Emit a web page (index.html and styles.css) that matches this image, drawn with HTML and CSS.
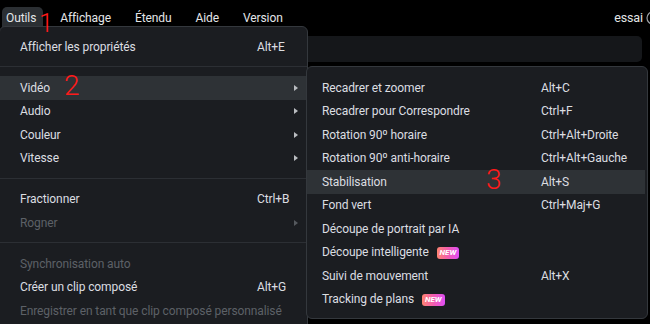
FILE: index.html
```html
<!DOCTYPE html>
<html lang="fr">
<head>
  <meta charset="UTF-8">
  <title>Menu Outils</title>
  <link rel="stylesheet" href="styles.css">
</head>
<body>

  <div class="topbar">
    <div class="menubar">
      <span class="mb-item active">Outils</span>
      <span class="mb-item">Affichage</span>
      <span class="mb-item">Étendu</span>
      <span class="mb-item">Aide</span>
      <span class="mb-item">Version</span>
    </div>
    <div class="user">
      <span>essai</span>
      <svg width="14" height="14" viewBox="0 0 14 14">
        <circle cx="7" cy="7" r="6" fill="none" stroke="#9a9ea3" stroke-width="1.2"/>
        <path d="M4.5 6 L7 8.5 L9.5 6" fill="none" stroke="#9a9ea3" stroke-width="1.2"/>
      </svg>
    </div>
  </div>

  <div class="workspace">
    <div class="panel panel-top"></div>
    <div class="panel panel-bottom"></div>
  </div>

  <div class="menu main-menu">
    <div class="item"><span>Afficher les propriétés</span><span class="key">Alt+E</span><span></span></div>
    <div class="sep"></div>
    <div class="item hover"><span>Vidéo</span><span></span><span class="arrow"></span></div>
    <div class="item"><span>Audio</span><span></span><span class="arrow"></span></div>
    <div class="item"><span>Couleur</span><span></span><span class="arrow"></span></div>
    <div class="item"><span>Vitesse</span><span></span><span class="arrow"></span></div>
    <div class="sep"></div>
    <div class="item"><span>Fractionner</span><span class="key">Ctrl+B</span><span></span></div>
    <div class="item disabled"><span>Rogner</span><span></span><span class="arrow"></span></div>
    <div class="sep"></div>
    <div class="item disabled"><span>Synchronisation auto</span><span></span><span></span></div>
    <div class="item"><span>Créer un clip composé</span><span class="key">Alt+G</span><span></span></div>
    <div class="item disabled"><span>Enregistrer en tant que clip composé personnalisé</span><span></span><span></span></div>
  </div>

  <div class="menu sub-menu">
    <div class="item"><span>Recadrer et zoomer</span><span class="key">Alt+C</span></div>
    <div class="item"><span>Recadrer pour Correspondre</span><span class="key">Ctrl+F</span></div>
    <div class="item"><span>Rotation 90º horaire</span><span class="key">Ctrl+Alt+Droite</span></div>
    <div class="item"><span>Rotation 90º anti-horaire</span><span class="key">Ctrl+Alt+Gauche</span></div>
    <div class="item hover"><span>Stabilisation</span><span class="key">Alt+S</span></div>
    <div class="item"><span>Fond vert</span><span class="key">Ctrl+Maj+G</span></div>
    <div class="item"><span>Découpe de portrait par IA</span><span></span></div>
    <div class="item"><span>Découpe intelligente <span class="badge">NEW</span></span><span></span></div>
    <div class="item"><span>Suivi de mouvement</span><span class="key">Alt+X</span></div>
    <div class="item"><span>Tracking de plans <span class="badge">NEW</span></span><span></span></div>
  </div>

  <span class="mark mark-1">1</span>
  <span class="mark mark-2">2</span>
  <span class="mark mark-3">3</span>

</body>
</html>
```

FILE: styles.css
```css
body {
  margin: 0;
  width: 650px;
  height: 324px;
  overflow: hidden;
  position: relative;
  background: #000;
  font-family: Roboto, "Open Sans", sans-serif;
  font-size: 12px;
  letter-spacing: -0.1px;
  color: #dcdee1;
}

.topbar {
  height: 30px;
  display: flex;
  justify-content: space-between;
  align-items: flex-start;
}

.menubar {
  display: flex;
  padding-top: 7px;
}

.mb-item {
  padding: 4px 12px 0;
  height: 22px;
  font-size: 12px;
  color: #e4e6e8;
}

.mb-item.active {
  padding: 4px 7px 0 4px;
  margin: 0 5px 0 2px;
  background: #2b2f33;
  border-radius: 5px 5px 0 0;
}

.user {
  display: flex;
  align-items: center;
  gap: 3px;
  padding-top: 10px;
  margin-right: -10px;
  font-size: 12.5px;
  color: #e4e6e8;
}

.workspace {
  height: 294px;
  display: flex;
  flex-direction: column;
  justify-content: space-between;
  padding: 6px 8px 0 0;
}

.panel {
  background: #15171a;
  border-radius: 0 5px 5px 0;
}

.panel-top {
  height: 26px;
}

.panel-bottom {
  height: 4px;
}

.menu {
  position: absolute;
  background: #1b1d21;
  border: 1px solid #34383d;
  border-radius: 6px;
  box-sizing: border-box;
}

.main-menu {
  left: -1px;
  top: 26px;
  width: 309px;
  height: 310px;
  padding-top: 8px;
}

.sub-menu {
  left: 306px;
  top: 66px;
  width: 342px;
  height: 253px;
  padding-top: 9px;
}

.item {
  display: grid;
  align-items: center;
  height: 23.5px;
  white-space: nowrap;
}

.main-menu .item {
  grid-template-columns: 1fr 37px 13px;
  padding-left: 20px;
}

.sub-menu .item {
  grid-template-columns: 219px 1fr;
  padding-left: 15px;
  margin-right: 2px;
}

.item.hover {
  background: #2e3236;
}

.item.disabled {
  color: #5d6167;
}

.arrow {
  width: 0;
  height: 0;
  border-left: 4px solid #b9bcc0;
  border-top: 3px solid transparent;
  border-bottom: 3px solid transparent;
}

.disabled .arrow {
  border-left-color: #55595e;
}

.sep {
  height: 1px;
  margin: 7.5px 0 9px;
  background: #2c2f34;
}

.badge {
  display: inline-block;
  margin-left: 5px;
  padding: 0 3px;
  height: 12px;
  line-height: 12px;
  border-radius: 3px;
  font-size: 8px;
  font-weight: 700;
  font-style: italic;
  letter-spacing: 0;
  color: #fff;
  vertical-align: 1px;
  background: linear-gradient(90deg, #ff8470, #f25cb0 50%, #df4ef6);
}

.mark {
  position: absolute;
  color: #ff1a1a;
  font-family: Roboto, sans-serif;
  font-weight: 300;
  line-height: 1;
}

.mark-1 {
  left: 39px;
  top: 10px;
  font-size: 26px;
}

.mark-2 {
  left: 64px;
  top: 72px;
  font-size: 28px;
}

.mark-3 {
  left: 486px;
  top: 166px;
  font-size: 28px;
}
```
